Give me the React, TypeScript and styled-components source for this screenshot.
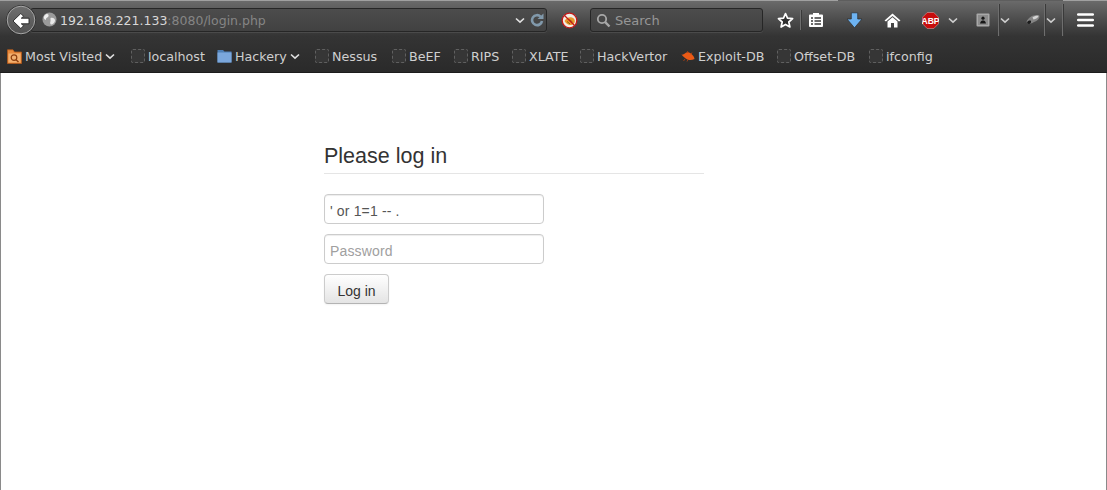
import React from "react";
import styled, { createGlobalStyle } from "styled-components";

const Global = createGlobalStyle`
  html, body { margin: 0; padding: 0; background: #fff; }
  #root { min-height: 100vh; }
  * { box-sizing: border-box; }
`;

const Page = styled.div`
  min-height: 100vh;
  display: flex;
  flex-direction: column;
  border-left: 1px solid #8a8a8a;
  border-right: 1px solid #8a8a8a;
`;

const Chrome = styled.header`
  margin-left: -1px;
  margin-right: -1px;
  font-family: "DejaVu Sans", sans-serif;
  border-bottom: 1px solid #1c1c1c;
`;

const NavBar = styled.div`
  height: 36px;
  display: flex;
  align-items: center;
  padding: 4px 0 0 6px;
  background:
    linear-gradient(to right, #a0a0a0 0 838px, #5e5e5e 838px 1063px, #a0a0a0 1063px) top / 100% 1px no-repeat,
    linear-gradient(to bottom, #6c6c6c 0%, #4c4c4c 55%, #343434 100%);
`;

const BackButton = styled.div`
  width: 30px;
  height: 30px;
  margin-right: -6px;
  position: relative;
  z-index: 1;
  flex: none;
`;

const Field = styled.div<{ $w: number; $ml?: number }>`
  width: ${(p) => p.$w}px;
  margin-left: ${(p) => p.$ml ?? 0}px;
  height: 24px;
  flex: none;
  display: flex;
  align-items: center;
  border: 1px solid #262626;
  border-radius: 3px;
  background: linear-gradient(to bottom, #4c4c4c, #414141);
  box-shadow: 0 1px 0 rgba(255, 255, 255, 0.09);
  font-size: 13px;
`;

const Globe = styled.span`
  width: 16px;
  height: 16px;
  margin-left: 11px;
  flex: none;
  display: flex;
`;

const UrlHost = styled.span`
  margin-left: 2px;
  color: #d8d8d8;
  font-size: 12.5px;
  white-space: nowrap;
`;

const UrlPath = styled.span`
  color: #858585;
  font-size: 12.5px;
  white-space: nowrap;
`;

const Spacer = styled.span`
  flex: 1;
`;

const FieldIcon = styled.span<{ $mr?: number; $ml?: number }>`
  display: flex;
  margin-right: ${(p) => p.$mr ?? 0}px;
  margin-left: ${(p) => p.$ml ?? 0}px;
`;

const SearchText = styled.span`
  margin-left: 4px;
  color: #969696;
`;

const Slot = styled.div<{ $w: number; $ml?: number }>`
  width: ${(p) => p.$w}px;
  margin-left: ${(p) => p.$ml ?? 0}px;
  flex: none;
  display: flex;
  align-items: center;
  justify-content: center;
`;

const Sep = styled.span<{ $ml?: number; $tall?: boolean }>`
  width: 2px;
  height: ${(p) => (p.$tall ? 32 : 20)}px;
  margin-left: ${(p) => p.$ml ?? 0}px;
  flex: none;
  background: #6e6e6e;
  border-right: 1px solid #3a3a3a;
`;

const BookmarkBar = styled.nav`
  height: 36px;
  display: flex;
  align-items: center;
  gap: 13px;
  padding: 4px 0 0 7px;
  background: linear-gradient(to bottom, #343434, #2a2a2a);
`;

const Bookmark = styled.div<{ $w?: number }>`
  width: ${(p) => (p.$w ? `${p.$w}px` : "auto")};
  flex: none;
  display: flex;
  align-items: center;
  gap: 3px;
  color: #cfcfcf;
  font-size: 12.7px;
  white-space: nowrap;
`;

const Favicon = styled.span`
  width: 14px;
  height: 14px;
  flex: none;
  border: 1px dashed #606060;
  border-radius: 2px;
  background: #363636;
`;

const Main = styled.main`
  padding: 60px 0 0 323px;
  background: #fff;
  flex: 1;
`;

const LoginForm = styled.form`
  width: 380px;
  display: flex;
  flex-direction: column;
  align-items: flex-start;
  font-family: "Liberation Sans", Arial, sans-serif;
`;

const Legend = styled.h2`
  width: 100%;
  height: 41px;
  margin: 0 0 20px;
  padding-top: 11px;
  font-size: 21.5px;
  font-weight: 400;
  line-height: 25px;
  color: #333;
  border-bottom: 1px solid #e5e5e5;
`;

const Input = styled.input`
  width: 220px;
  height: 30px;
  margin: 0 0 10px;
  padding: 6px 5px 2px;
  font: 14px "Liberation Sans", Arial, sans-serif;
  letter-spacing: 0.15px;
  color: #555;
  background: #fff;
  border: 1px solid #ccc;
  border-radius: 4px;
  box-shadow: inset 0 1px 1px rgba(0, 0, 0, 0.075);
  outline: none;
  &::placeholder { color: #a0a0a0; opacity: 1; }
`;

const Button = styled.button`
  width: 65px;
  height: 30px;
  padding: 3px 0 0;
  font: 14px "Liberation Sans", Arial, sans-serif;
  color: #333;
  background: linear-gradient(to bottom, #fff, #e4e4e4);
  border: 1px solid #ccc;
  border-bottom-color: #b3b3b3;
  border-radius: 4px;
  box-shadow: inset 0 1px 0 rgba(255, 255, 255, 0.2), 0 1px 2px rgba(0, 0, 0, 0.05);
`;

const Chevron = ({ c = "#e0e0e0" }: { c?: string }) => (
  <svg width="10" height="7" viewBox="0 0 10 7" style={{ flex: "none" }}>
    <path d="M1 1.5 L5 5.2 L9 1.5" fill="none" stroke={c} strokeWidth="1.6" />
  </svg>
);

const BackIcon = () => (
  <svg width="30" height="30" viewBox="0 0 30 30">
    <defs>
      <linearGradient id="bk" x1="0" y1="0" x2="0" y2="1">
        <stop offset="0" stopColor="#6e6e6e" />
        <stop offset="1" stopColor="#525252" />
      </linearGradient>
    </defs>
    <circle cx="15" cy="15" r="14.8" fill="#2a2a2a" />
    <circle cx="15" cy="15" r="13.8" fill="url(#bk)" stroke="#a8a8a8" strokeWidth="1" />
    <path d="M14.8 8.5 L7 16 L14.8 23.5 L17.6 20.7 L15.3 18.8 H23 V13.2 H15.3 L17.6 11.3 Z" fill="#fff" stroke="#222" strokeWidth="0.9" strokeLinejoin="round" />
  </svg>
);

const GlobeIcon = () => (
  <svg width="15" height="15" viewBox="0 0 15 15">
    <circle cx="7.5" cy="7.5" r="7" fill="#9a9a9a" />
    <path d="M2.5 3.5 C5 1 7 2 6.5 4 C6 6 3.5 5.5 4 8 C2.5 7.5 1 6 2.5 3.5Z" fill="#eee" />
    <path d="M8.5 6 C11 5 13.5 7 13 9 C12 12 9.5 13.5 8.5 12 C7.5 10.5 9 9.5 8.5 8 Z" fill="#e8e8e8" />
  </svg>
);

const ReloadIcon = () => (
  <svg width="14" height="14" viewBox="0 0 14 14">
    <path d="M10.6 3.6 A5 5 0 1 0 12 8" fill="none" stroke="#8199ab" strokeWidth="2.6" />
    <path d="M7.5 6 H13.5 V0.5 Z" fill="#8199ab" />
  </svg>
);

const NoScriptIcon = () => (
  <svg width="17" height="17" viewBox="0 0 17 17">
    <circle cx="8.5" cy="8.5" r="7.5" fill="#f2ede6" />
    <path d="M3.5 9 C5 6 8 4.5 11 5.5 C14 6.5 14.5 9.5 13 11.5 C10.5 14 6 13.5 3.5 9Z" fill="#e8982c" />
    <path d="M6 9.5 L9 12 M8.5 7.5 L11.5 10" stroke="#8a5a10" strokeWidth="1" />
    <circle cx="8.5" cy="8.5" r="7.3" fill="none" stroke="#c21818" strokeWidth="1.3" />
    <path d="M3.5 3.5 L13.5 13.5" stroke="#c21818" strokeWidth="1.3" />
  </svg>
);

const SearchIcon = () => (
  <svg width="15" height="15" viewBox="0 0 15 15">
    <circle cx="6" cy="6" r="4.2" fill="none" stroke="#a8a8a8" strokeWidth="1.8" />
    <path d="M9.2 9.2 L13.5 13.5" stroke="#a8a8a8" strokeWidth="2.4" />
  </svg>
);

const StarIcon = () => (
  <svg width="17" height="17" viewBox="0 0 17 17">
    <path d="M8.5 1.6 L10.5 6.2 L15.6 6.7 L11.8 10 L12.9 15 L8.5 12.4 L4.1 15 L5.2 10 L1.4 6.7 L6.5 6.2 Z" fill="#2f2f2f" stroke="#fff" strokeWidth="1.7" strokeLinejoin="round" />
  </svg>
);

const ClipboardIcon = () => (
  <svg width="16" height="16" viewBox="0 0 16 16">
    <path d="M1 3.5 Q1 2.5 2 2.5 H5 V1 H11 V2.5 H14 Q15 2.5 15 3.5 V14 Q15 15 14 15 H2 Q1 15 1 14 Z" fill="#fff" />
    <path d="M3 6 H5 M6.5 6 H13 M3 9 H5 M6.5 9 H13 M3 12 H5 M6.5 12 H13" stroke="#3a3a3a" strokeWidth="1.3" />
  </svg>
);

const DownloadIcon = () => (
  <svg width="17" height="17" viewBox="0 0 17 17">
    <path d="M5.3 0.8 H11.7 V7 H16 L8.5 15.8 L1 7 H5.3 Z" fill="#6db3f2" stroke="#2d2d2d" strokeWidth="0.7" />
  </svg>
);

const HomeIcon = () => (
  <svg width="17" height="15" viewBox="0 0 17 15">
    <path d="M8.5 0.5 L16.5 7.5 L15 8.5 L8.5 3 L2 8.5 L0.5 7.5 Z" fill="#fff" />
    <path d="M3.5 8.5 L8.5 4.2 L13.5 8.5 V14.5 H10 V10 H7 V14.5 H3.5 Z" fill="#fff" />
  </svg>
);

const AbpIcon = () => (
  <svg width="17" height="17" viewBox="0 0 17 17">
    <path d="M5.2 0.5 H11.8 L16.5 5.2 V11.8 L11.8 16.5 H5.2 L0.5 11.8 V5.2 Z" fill="#c70d0d" stroke="#e8b0b0" strokeWidth="0.5" />
    <text x="8.5" y="11.6" textAnchor="middle" fontFamily="Liberation Sans" fontWeight="700" fontSize="8.6" fill="#fff">ABP</text>
  </svg>
);

const ExtBoxIcon = () => (
  <svg width="14" height="14" viewBox="0 0 14 14">
    <rect x="0.5" y="0.5" width="13" height="13" rx="1" fill="#a8a8a8" />
    <rect x="2" y="2" width="10" height="10" fill="#8c8c8c" />
    <circle cx="7" cy="5.2" r="1.6" fill="#161616" />
    <path d="M4 10.5 C4.5 8 5.8 7.5 7 7.5 C8.2 7.5 9.5 8 10 10.5 Z" fill="#161616" />
  </svg>
);

const PaletteIcon = () => (
  <svg width="16" height="14" viewBox="0 0 16 14">
    <path d="M1.5 9 C3 4 9 1 14 2.2 C15.5 4 13 8 9 9 C6 11 3.5 11.5 1.5 9 Z" fill="#858585" />
    <path d="M7.5 4.5 C9 3 12 2.5 13.5 3 C13 5 11 6 8.5 6.5 Z" fill="#d4d4d4" />
    <path d="M2 9.5 C3 7.5 5 7 6 8 C6.5 9.5 5 11.5 3.5 11 Z" fill="#1c1c1c" />
  </svg>
);

const MenuIcon = () => (
  <svg width="17" height="14" viewBox="0 0 17 14">
    <path d="M1.2 1.5 H15.8 M1.2 7 H15.8 M1.2 12.5 H15.8" stroke="#fff" strokeWidth="2.6" strokeLinecap="round" />
  </svg>
);

const MostVisitedIcon = () => (
  <svg width="15" height="15" viewBox="0 0 15 15" style={{ flex: "none" }}>
    <path d="M0.5 0.8 H6 L7.5 3 H14.5 V14.5 H0.5 Z" fill="#e88a3c" stroke="#b4591a" strokeWidth="0.8" />
    <rect x="1.5" y="4.5" width="12" height="9" fill="#f2b070" />
    <circle cx="7" cy="8.6" r="2.8" fill="none" stroke="#8c3d0c" strokeWidth="1.2" />
    <path d="M9 10.7 L11.5 13" stroke="#8c3d0c" strokeWidth="1.4" />
  </svg>
);

const FolderIcon = () => (
  <svg width="15" height="14" viewBox="0 0 15 14" style={{ flex: "none" }}>
    <path d="M0.5 1 H6 L7.5 2.5 H14.5 V13.5 H0.5 Z" fill="#4f7fb5" />
    <rect x="0.5" y="3.5" width="14" height="10" fill="#7ba7dc" />
  </svg>
);

const RoachIcon = () => (
  <svg width="14" height="12" viewBox="0 0 14 12" style={{ flex: "none" }}>
    <path d="M0.5 4.5 C3 5.5 4.5 1.5 8 2.5 C11 3.5 13.5 7 13.5 9 C10 11 6 10 4 8 C3 7 1.5 6 0.5 4.5Z" fill="#ea5a16" />
    <path d="M4 9 L2.5 11 M7 9.5 L6 11.5 M7 3 L6.5 1 M10 4.5 L11 2.5" stroke="#b8430f" strokeWidth="0.8" />
  </svg>
);

const plainAfter: [string, number][] = [
  ["Nessus", 64],
  ["BeEF", 49],
  ["RIPS", 45],
  ["XLATE", 55],
  ["HackVertor", 88],
];

export default function App() {
  return (
    <>
      <Global />
      <Page>
        <Chrome>
          <NavBar>
            <BackButton><BackIcon /></BackButton>
            <Field $w={517}>
              <Globe><GlobeIcon /></Globe>
              <UrlHost>192.168.221.133</UrlHost>
              <UrlPath>:8080/login.php</UrlPath>
              <Spacer />
              <FieldIcon $mr={5}><Chevron /></FieldIcon>
              <FieldIcon $mr={2}><ReloadIcon /></FieldIcon>
            </Field>
            <Slot $w={22} $ml={11}><NoScriptIcon /></Slot>
            <Field $w={173} $ml={10}>
              <FieldIcon $ml={5}><SearchIcon /></FieldIcon>
              <SearchText>Search</SearchText>
            </Field>
            <Slot $w={24} $ml={10}><StarIcon /></Slot>
            <Sep $ml={3} />
            <Slot $w={24} $ml={2}><ClipboardIcon /></Slot>
            <Slot $w={24} $ml={14}><DownloadIcon /></Slot>
            <Slot $w={24} $ml={14}><HomeIcon /></Slot>
            <Slot $w={24} $ml={14}><AbpIcon /></Slot>
            <Slot $w={16} $ml={3}><Chevron c="#cfcfcf" /></Slot>
            <Slot $w={24} $ml={10}><ExtBoxIcon /></Slot>
            <Sep $ml={3} $tall />
            <Slot $w={10}><Chevron c="#cfcfcf" /></Slot>
            <Slot $w={22} $ml={12}><PaletteIcon /></Slot>
            <Sep $tall />
            <Slot $w={10}><Chevron c="#cfcfcf" /></Slot>
            <Sep $ml={6} $tall />
            <Slot $w={24} $ml={9}><MenuIcon /></Slot>
          </NavBar>
          <BookmarkBar>
            <Bookmark $w={111}><MostVisitedIcon />Most Visited<Chevron /></Bookmark>
            <Bookmark $w={73}><Favicon />localhost</Bookmark>
            <Bookmark $w={85}><FolderIcon />Hackery<Chevron /></Bookmark>
            {plainAfter.map(([name, w]) => (
              <Bookmark key={name} $w={w}><Favicon />{name}</Bookmark>
            ))}
            <Bookmark $w={83}><RoachIcon />Exploit-DB</Bookmark>
            <Bookmark $w={79}><Favicon />Offset-DB</Bookmark>
            <Bookmark><Favicon />ifconfig</Bookmark>
          </BookmarkBar>
        </Chrome>
        <Main>
          <LoginForm onSubmit={(e) => e.preventDefault()}>
            <Legend>Please log in</Legend>
            <Input type="text" defaultValue="' or 1=1 -- ." />
            <Input type="password" placeholder="Password" />
            <Button type="submit">Log in</Button>
          </LoginForm>
        </Main>
      </Page>
    </>
  );
}
